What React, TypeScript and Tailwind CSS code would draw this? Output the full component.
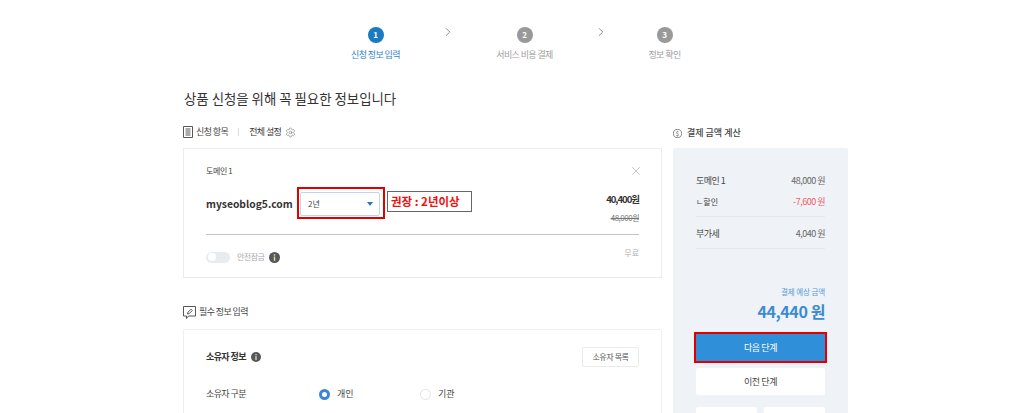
import { ChevronRight, X, Settings } from "lucide-react";

const font = "font-['Noto_Sans_CJK_KR','Noto_Sans',sans-serif]";

function Step({ n, label, active, className }: { n: number; label: string; active?: boolean; className: string }) {
  return (
    <div className={`flex flex-col items-center gap-[5px] ${className}`}>
      <div className={`w-4 h-4 rounded-full flex items-center justify-center text-white text-[8px] font-bold leading-none ${active ? "bg-[#1a7bc1]" : "bg-[#999999]"}`}>
        {n}
      </div>
      <span className={`text-[9px] leading-[13px] tracking-[-0.6px] whitespace-nowrap ${active ? "text-[#2f86c6]" : "text-[#a0a0a0]"}`}>{label}</span>
    </div>
  );
}

function Info({ size = 11 }: { size?: number }) {
  return (
    <svg width={size} height={size} viewBox="0 0 12 12" className="shrink-0">
      <circle cx="6" cy="6" r="6" fill="#55585e" />
      <rect x="5.2" y="2.4" width="1.6" height="1.6" fill="#e8d98a" />
      <rect x="5.2" y="5" width="1.6" height="4.6" fill="#e8d98a" />
    </svg>
  );
}

function Row({ label, value, small, red }: { label: string; value: string; small?: boolean; red?: boolean }) {
  return (
    <div className="flex items-center justify-between">
      <span className={`${small ? "text-[8px]" : "text-[9px] tracking-[-0.5px]"} text-[#444] leading-[13px]`}>{label}</span>
      <span className={`text-[9px] tracking-[-0.5px] leading-[13px] ${red ? "text-[#f0596b]" : "text-[#666]"}`}>{value}</span>
    </div>
  );
}

export default function App() {
  return (
    <div className={`h-[413px] w-[1024px] overflow-hidden bg-white ${font}`}>
      {/* Steps */}
      <div className="flex items-start pt-[27px] pl-[351px] h-[88px]">
        <Step n={1} label="신청 정보 입력" active className="w-[49px]" />
        <ChevronRight size={14} strokeWidth={1.1} className="text-[#555] ml-[41px] -mt-[2px]" />
        <Step n={2} label="서비스 비용 결제" className="w-[57px] ml-[41px]" />
        <ChevronRight size={14} strokeWidth={1.1} className="text-[#555] ml-[41px] -mt-[2px]" />
        <Step n={3} label="정보 확인" className="w-[33px] ml-[40px]" />
      </div>

      <div className="flex pl-[183px] gap-[11px]">
        {/* Left column */}
        <div className="w-[479px]">
          <h1 className="text-[13.4px] leading-[20px] font-normal text-[#333] pl-px mb-[16px]">상품 신청을 위해 꼭 필요한 정보입니다</h1>

          <div className="flex items-center h-[16px] mb-[8px]">
            <svg width="10" height="12" viewBox="0 0 10 12" fill="none" stroke="#444" strokeWidth="0.9">
              <path d="M.5.5h9v11h-9z" />
              <path d="M2.5 3h5M2.5 5h5M2.5 7h5M2.5 9h5" />
            </svg>
            <span className="text-[9px] tracking-[-0.6px] text-[#444] ml-[3px]">신청 항목</span>
            <span className="w-px h-[8px] bg-[#ddd] ml-[10px]" />
            <span className="text-[9px] tracking-[-0.6px] text-[#333] ml-[10px]">전체 설정</span>
            <Settings size={11} strokeWidth={1} className="text-[#555] ml-[4px]" />
          </div>

          {/* Domain card */}
          <div className="border border-[#ececec] h-[130px] px-[22px] pt-[15px]">
            <div className="flex items-center justify-between h-[13px]">
              <span className="text-[8px] tracking-[-0.4px] text-[#444]">도메인 1</span>
              <X size={14} strokeWidth={0.7} className="text-[#777] -mr-[4px]" />
            </div>
            <div className="flex items-start mt-[10px] h-[39px]">
              <span className="text-[10.3px] font-bold text-[#333] w-[91px] mt-[9px] leading-[16px]">myseoblog5.com</span>
              <div className="border-2 border-[#e00000] w-[88px] h-[32px] pt-[3px] pl-px pr-[3px]">
                <div className="h-[24px] border border-[#c4d3e6] rounded-[2px] flex items-center justify-between pl-[7px] pr-[6px]">
                  <span className="text-[8px] text-[#444]">2년</span>
                  <span className="w-0 h-0 border-x-[3px] border-x-transparent border-t-[4px] border-t-[#2d79b7]" />
                </div>
              </div>
              <div className="ml-[2px] mt-[4px] w-[85px] h-[21px] border border-[#666] flex items-center pl-[3px] text-[11.5px] font-bold text-[#f01010] whitespace-nowrap">
                권장 : 2년이상
              </div>
              <div className="ml-auto flex flex-col items-end mt-[5px]">
                <span className="text-[9.5px] font-bold text-[#333] tracking-[-1px] leading-[14px]">40,400원</span>
                <span className="text-[8px] text-[#777] line-through tracking-[-0.5px] leading-[12px] mt-[6px]">48,000원</span>
              </div>
            </div>
            <div className="h-px bg-[#c4c4c4] mt-[8px]" />
            <div className="flex justify-end text-[8px] text-[#b0b0b0] mt-[12px] leading-[12px]">무료</div>
            <div className="flex items-center -mt-[8px]">
              <div className="w-[24px] h-[11px] rounded-full bg-[#e9ecef] flex items-center pl-[2px]">
                <span className="w-[8px] h-[8px] rounded-full bg-white" />
              </div>
              <span className="text-[8px] tracking-[-0.5px] text-[#aaa] ml-[7px]">안전잠금</span>
              <span className="ml-[5px]"><Info /></span>
            </div>
          </div>

          <div className="flex items-center mt-[26px] h-[16px]">
            <svg width="13" height="13" viewBox="0 0 13 13" fill="none" stroke="#444" strokeWidth="0.9">
              <path d="M.5.5h12v9.5H5.5L3.5 12.5V10h-3z" />
              <path d="M4.5 8l.5-1.8L8 3.2l1.3 1.3-3 3z" />
            </svg>
            <span className="text-[9px] tracking-[-0.6px] text-[#444] ml-[3px]">필수 정보 입력</span>
          </div>

          {/* Owner card */}
          <div className="border border-[#f0f0f0] h-[120px] mt-[9px] px-[22px] pt-[17px]">
            <div className="flex items-center justify-between h-[20px]">
              <div className="flex items-center">
                <span className="text-[9px] tracking-[-0.6px] font-bold text-[#333]">소유자 정보</span>
                <span className="ml-[5px]"><Info size={10} /></span>
              </div>
              <span className="w-[57px] h-[20px] border border-[#eaeaea] rounded-[2px] flex items-center justify-center text-[8px] tracking-[-0.4px] text-[#555]">소유자 목록</span>
            </div>
            <div className="flex items-center mt-[20px] h-[14px]">
              <span className="text-[9px] tracking-[-0.6px] text-[#444] w-[113px]">소유자 구분</span>
              <span className="w-[11px] h-[11px] rounded-full border-[3px] border-[#3b86d8] bg-white" />
              <span className="text-[9px] text-[#444] ml-[7px] w-[83px]">개인</span>
              <span className="w-[11px] h-[11px] rounded-full border border-[#e2e2e2] bg-white" />
              <span className="text-[9px] text-[#444] ml-[7px]">기관</span>
            </div>
          </div>
        </div>

        {/* Right column */}
        <div className="w-[175px]">
          <div className="flex items-center h-[16px] mt-[37px]">
            <svg width="9" height="9" viewBox="0 0 9 9" fill="none" stroke="#555" strokeWidth="0.7">
              <circle cx="4.5" cy="4.5" r="4.1" />
              <text x="4.5" y="6.6" textAnchor="middle" fontSize="6" fill="#555" stroke="none">$</text>
            </svg>
            <span className="text-[9px] font-medium text-[#444] ml-[5px]">결제 금액 계산</span>
          </div>

          <div className="bg-[#eff2f7] rounded-[2px] mt-[7px] h-[280px] px-[23px] pt-[26px]">
            <Row label="도메인 1" value="48,000 원" />
            <div className="mt-[8px]">
              <Row label=" ㄴ할인" value="-7,600 원" small red />
            </div>
            <div className="h-px bg-[#e4e7ec] mt-[8px]" />
            <div className="mt-[10px]">
              <Row label="부가세" value="4,040 원" />
            </div>
            <div className="h-px bg-[#e4e7ec] mt-[8px]" />

            <p className="text-right text-[7.5px] text-[#5b9bd5] mt-[37px] leading-[12px] tracking-[-0.1px]">결제 예상 금액</p>
            <p className="text-right text-[16px] font-bold text-[#3b8bd0] tracking-[-0.4px] leading-[24px] mt-[1px]">44,440 원</p>

            <div className="border-2 border-[#e00000] h-[31px] mt-[9px] -mx-[2px] bg-[#2f8fd8] flex items-center justify-center text-[9px] tracking-[-0.4px] text-white">다음 단계</div>
            <div className="h-[27px] mt-[5px] bg-white rounded-[2px] flex items-center justify-center text-[9px] tracking-[-0.4px] text-[#444]">이전 단계</div>
            <div className="flex gap-[7px] mt-[12px]">
              <div className="h-[28px] w-[61px] bg-white rounded-[2px]" />
              <div className="h-[28px] flex-1 bg-white rounded-[2px]" />
            </div>
          </div>
        </div>
      </div>
    </div>
  );
}
